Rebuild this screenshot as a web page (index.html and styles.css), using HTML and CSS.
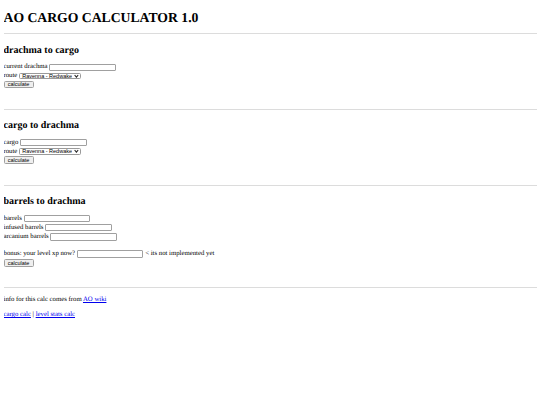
FILE: index.html
```html
<!DOCTYPE html>
<html lang="en">
<head>
    <meta charset="UTF-8">
    <meta name="viewport" content="width=device-width, initial-scale=1.0">
    <title>AO cargo calculator</title>
    <link rel="stylesheet" href="styles.css">
</head>

<body>

    <h1>AO CARGO CALCULATOR 1.0</h1>
    <hr>

    <section class="calc">
        <h2>drachma to cargo</h2>
        <div class="row">
            <label for="drachma">current drachma</label>
            <input type="text" id="drachma">
        </div>
        <div class="row row-select">
            <label for="route1">route</label>
            <span class="select">
                <select id="route1">
                    <option>Ravenna - Redwake</option>
                </select>
            </span>
        </div>
        <div class="row row-btn">
            <button>calculate</button>
        </div>
    </section>
    <hr>

    <section class="calc">
        <h2>cargo to drachma</h2>
        <div class="row">
            <label for="cargo">cargo</label>
            <input type="text" id="cargo">
        </div>
        <div class="row row-select">
            <label for="route2">route</label>
            <span class="select">
                <select id="route2">
                    <option>Ravenna - Redwake</option>
                </select>
            </span>
        </div>
        <div class="row row-btn">
            <button>calculate</button>
        </div>
    </section>
    <hr>

    <section class="calc">
        <h2>barrels to drachma</h2>
        <div class="row">
            <label for="barrels">barrels</label>
            <input type="text" id="barrels">
        </div>
        <div class="row">
            <label for="infused">infused barrels</label>
            <input type="text" id="infused">
        </div>
        <div class="row">
            <label for="arcanium">arcanium barrels</label>
            <input type="text" id="arcanium">
        </div>
        <div class="row bonus">
            <label for="xp">bonus: your level xp now?</label>
            <input type="text" id="xp">
            <span>&lt; its not implemented yet</span>
        </div>
        <div class="row row-btn">
            <button>calculate</button>
        </div>
    </section>
    <hr>

    <footer>
        <p>info for this calc comes from <a href="#">AO wiki</a></p>
        <p><a href="#">cargo calc</a> | <a href="#">level stats calc</a></p>
    </footer>

</body>

</html>
```

FILE: styles.css
```css
body {
    margin: 0 3.5px;
    font-family: "Liberation Serif", serif;
    font-size: 6.75px;
    line-height: 8px;
    color: #000;
    background: #fff;
    text-rendering: geometricPrecision;
}

h1 {
    font-size: 13.7px;
    line-height: 17px;
    margin: 9px 0 7px;
}

hr {
    height: 0;
    margin: 0;
    border: 0;
    border-top: 1px solid #dcdcdc;
}

/* one block per calculator */
.calc {
    padding: 10.5px 0 19.9px;
}

h2 {
    font-size: 10px;
    line-height: 12px;
    margin: 0 0 6px;
}

.row {
    display: flex;
    align-items: center;
    gap: 1.8px;
    height: 9.2px;
}

.row-select {
    height: 8.2px;
}

.row-btn {
    height: 9px;
}

.bonus {
    margin-top: 7.8px;
}

input,
select,
button {
    font-family: "Liberation Sans", sans-serif;
    font-size: 5.5px;
    box-sizing: border-box;
    margin: 0;
    color: #000;
}

input {
    width: 66.5px;
    height: 7.2px;
    padding: 0 1px;
    border: 1px solid #a0a0a0;
    border-radius: 1px;
}

.select {
    position: relative;
    display: inline-block;
}

select {
    appearance: none;
    display: block;
    width: 62px;
    height: 6.5px;
    line-height: 4.5px;
    padding: 0 8px 0 2px;
    border: 1px solid #9a9a9a;
    border-radius: 1.5px;
    background: #fff;
}

/* little chevron on the dropdown */
.select::after {
    content: "";
    position: absolute;
    right: 3.5px;
    top: 1.2px;
    width: 1.8px;
    height: 1.8px;
    border-right: 1px solid #222;
    border-bottom: 1px solid #222;
    transform: rotate(45deg);
}

button {
    height: 7.6px;
    width: 30px;
    padding: 0;
    line-height: 5px;
    border: 1px solid #a0a0a0;
    border-radius: 1.5px;
    background: #efefef;
}

footer {
    padding-top: 7.5px;
}

footer p {
    margin: 0 0 7px;
}

a {
    color: #0000ee;
}
```
